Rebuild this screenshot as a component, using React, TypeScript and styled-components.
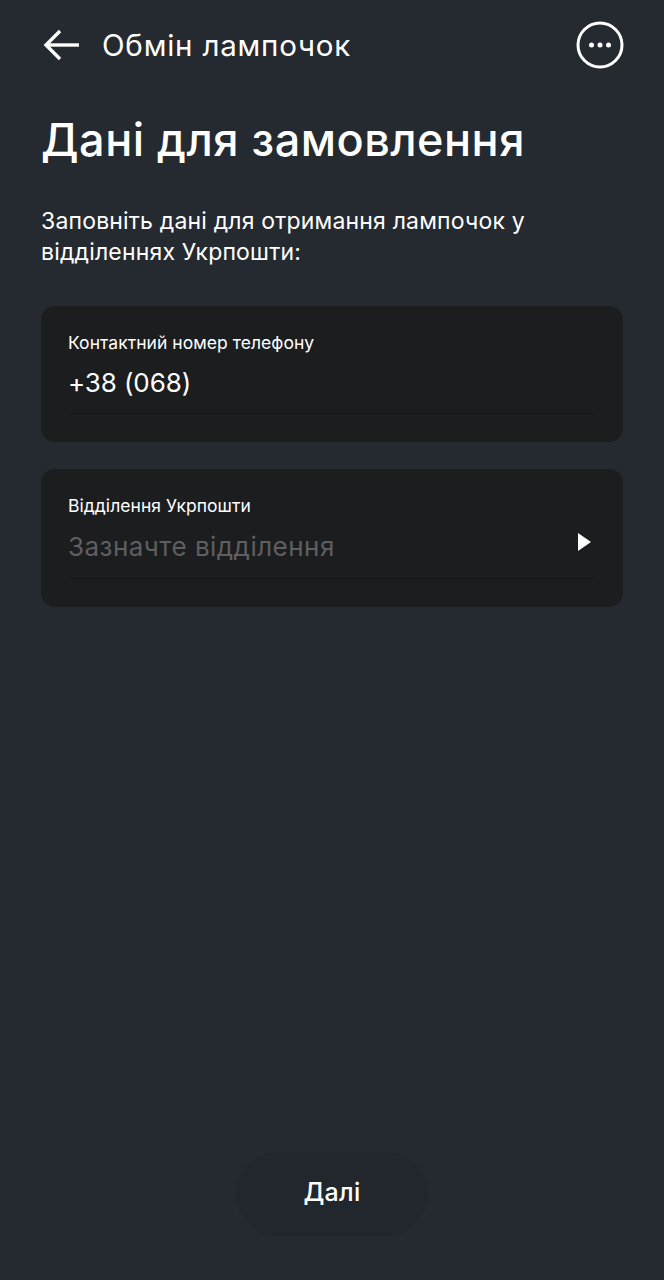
import React from "react";
import styled, { createGlobalStyle } from "styled-components";

const GlobalStyle = createGlobalStyle`
  html, body {
    margin: 0;
    padding: 0;
    background: #252a31;
  }
  * {
    box-sizing: border-box;
  }
`;

const Screen = styled.div`
  width: 664px;
  height: 1280px;
  padding: 0 41px;
  display: flex;
  flex-direction: column;
  background: #252a31;
  color: #fff;
  font-family: Inter, "Liberation Sans", sans-serif;
`;

const Header = styled.header`
  height: 46px;
  margin-top: 22px;
  display: flex;
  align-items: center;
`;

const BackIcon = styled.svg`
  width: 38px;
  height: 34px;
  margin-right: 23px;
  flex: none;
`;

const HeaderTitle = styled.div`
  flex: 1;
  margin-top: -1px;
  font-size: 29.5px;
  font-weight: 400;
  letter-spacing: 0.8px;
`;

const MoreIcon = styled.svg`
  width: 48px;
  height: 48px;
  margin-right: -1px;
  flex: none;
`;

const Title = styled.h1`
  margin: 46px 0 0;
  font-size: 45px;
  line-height: 52px;
  font-weight: 500;
  letter-spacing: 0.5px;
`;

const Intro = styled.p`
  margin: 40px 0 0;
  font-size: 23px;
  line-height: 31px;
  font-weight: 400;
  letter-spacing: 0.18px;
`;

const Form = styled.div`
  margin-top: 38px;
  display: flex;
  flex-direction: column;
  gap: 27px;
`;

const Card = styled.div`
  padding: 26px 27px 28px;
  border-radius: 14px;
  background: #1c1d1f;
`;

const Label = styled.div`
  font-size: 17.5px;
  line-height: 22px;
  letter-spacing: 0.05px;
`;

const Field = styled.div<{ $tall?: boolean }>`
  height: ${(p) => (p.$tall ? "59px" : "57px")};
  margin-top: 3px;
  padding-bottom: 6px;
  display: flex;
  align-items: center;
  justify-content: space-between;
  border-bottom: 1px solid #161719;
`;

const Value = styled.div<{ $placeholder?: boolean }>`
  font-size: 26px;
  letter-spacing: ${(p) => (p.$placeholder ? "0.47px" : "-0.1px")};
  color: ${(p) => (p.$placeholder ? "#5e5f61" : "#fff")};
`;

const Caret = styled.svg`
  width: 15px;
  height: 20px;
  margin-right: 4px;
  margin-top: -8px;
`;

const Footer = styled.div`
  margin-top: auto;
  margin-bottom: 44px;
  display: flex;
  justify-content: center;
`;

const NextButton = styled.button`
  width: 192px;
  height: 84px;
  padding: 0 0 4px;
  border: 0;
  border-radius: 42px;
  background: #22272d;
  color: #fff;
  font-family: inherit;
  font-size: 25px;
  font-weight: 500;
  letter-spacing: 0.3px;
`;

const App: React.FC = () => (
  <>
    <GlobalStyle />
    <Screen>
      <Header>
        <BackIcon viewBox="0 0 38 34" fill="none" stroke="#fff" strokeWidth="3.4">
          <path d="M38 17H6" />
          <path d="M19 3L5 17l14 14" />
        </BackIcon>
        <HeaderTitle>Обмін лампочок</HeaderTitle>
        <MoreIcon viewBox="0 0 48 48">
          <circle cx="24" cy="24" r="22" fill="none" stroke="#fff" strokeWidth="3" />
          <circle cx="15.500" cy="24" r="2.500" fill="#fff" />
          <circle cx="24" cy="24" r="2.500" fill="#fff" />
          <circle cx="32.500" cy="24" r="2.500" fill="#fff" />
        </MoreIcon>
      </Header>
      <Title>Дані для замовлення</Title>
      <Intro>
        Заповніть дані для отримання лампочок у
        <br />
        відділеннях Укрпошти:
      </Intro>
      <Form>
        <Card>
          <Label>Контактний номер телефону</Label>
          <Field>
            <Value>+38 (068)</Value>
          </Field>
        </Card>
        <Card>
          <Label>Відділення Укрпошти</Label>
          <Field $tall>
            <Value $placeholder>Зазначте відділення</Value>
            <Caret viewBox="0 0 15 20">
              <path d="M1 1l13 9-13 9z" fill="#fff" />
            </Caret>
          </Field>
        </Card>
      </Form>
      <Footer>
        <NextButton>Далі</NextButton>
      </Footer>
    </Screen>
  </>
);

export default App;
